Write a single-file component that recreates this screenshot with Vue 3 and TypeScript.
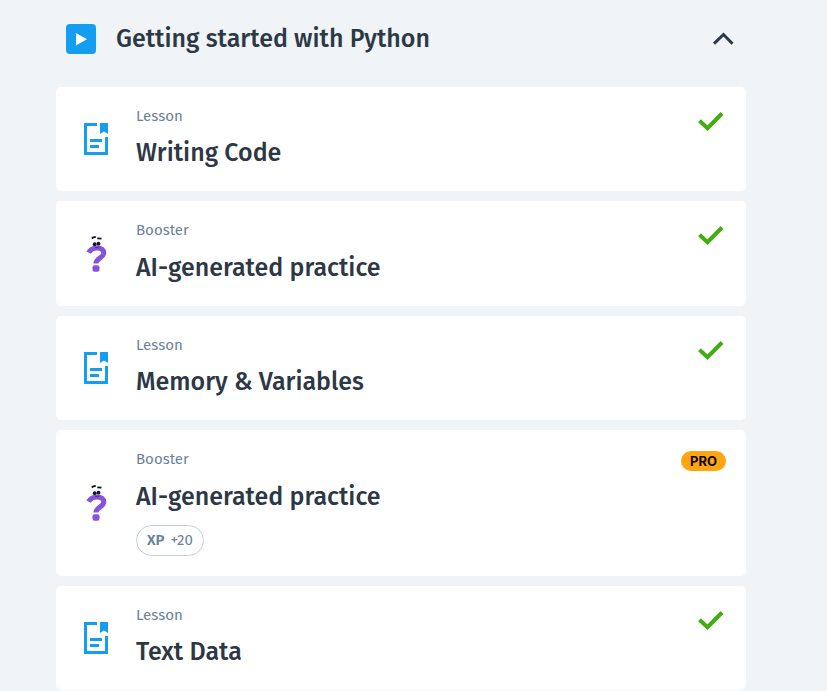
<script setup lang="ts">
import { ref } from 'vue'

interface Item {
  id: number
  kind: 'Lesson' | 'Booster'
  title: string
  status: 'done' | 'pro'
  xp?: number
}

const open = ref(true)

const items: Item[] = [
  { id: 1, kind: 'Lesson', title: 'Writing Code', status: 'done' },
  { id: 2, kind: 'Booster', title: 'AI-generated practice', status: 'done' },
  { id: 3, kind: 'Lesson', title: 'Memory & Variables', status: 'done' },
  { id: 4, kind: 'Booster', title: 'AI-generated practice', status: 'pro', xp: 20 },
  { id: 5, kind: 'Lesson', title: 'Text Data', status: 'done' },
]
</script>

<template>
  <main class="module">
    <h2 class="module-heading">
      <button class="module-toggle" type="button" :aria-expanded="open" @click="open = !open">
        <svg class="play" viewBox="0 0 30 30" aria-hidden="true">
          <rect width="30" height="30" rx="4" fill="#149ef2" />
          <path d="M10 9v12.500l11-6.250z" fill="#fff" />
        </svg>
        <span class="module-title">Getting started with Python</span>
        <svg class="chevron" :class="{ closed: !open }" viewBox="0 0 22 14" aria-hidden="true">
          <path d="M2 11.700L11.500 2.500l9 9.200" fill="none" stroke="#2d3846" stroke-width="3" />
        </svg>
      </button>
    </h2>

    <ul v-if="open" class="items">
      <li v-for="item in items" :key="item.id">
        <a href="#" class="card" :class="item.kind.toLowerCase()">
          <span class="icon">
            <svg v-if="item.kind === 'Lesson'" width="24" height="32" viewBox="0 0 24 32" aria-hidden="true">
              <path d="M0 0h13v3H3v26h18V14h3v18H0z" fill="#149ef2" />
              <path d="M16 0h8v11l-4-2.500-4 2.500z" fill="#149ef2" />
              <path d="M6 16h12v3H6zM6 22h9v3H6z" fill="#149ef2" />
            </svg>
            <svg v-else width="22" height="36" viewBox="0 0 22 36" aria-hidden="true">
              <path
                d="M3.600 16.600C5.300 13.300 8.200 11.900 12.300 11.900c4 0 6.500 1.800 6.500 5 0 5-7.700 5-7.900 10.600"
                fill="none" stroke="#8654dc" stroke-width="5"
              />
              <rect x="7.500" y="29.200" width="7" height="6.600" rx="2" fill="#8654dc" />
              <circle cx="9.700" cy="8.200" r="1.900" fill="#12122b" />
              <circle cx="13.500" cy="7.700" r="1.900" fill="#12122b" />
              <path d="M6.800 2.500l1.500-1.100 2.500-.5M12.300 2.300l4.200.4" fill="none" stroke="#12122b" stroke-width="1.800" />
              <path d="M10 11q2.300 1.800 4.500-.2" fill="none" stroke="#4d358e" stroke-width="1" />
            </svg>
          </span>
          <span class="body">
            <span class="kind">{{ item.kind }}</span>
            <span class="title">{{ item.title }}</span>
            <span v-if="item.xp" class="xp"><b>XP</b><span>+{{ item.xp }}</span></span>
          </span>
          <svg v-if="item.status === 'done'" class="check" viewBox="0 0 26 20" role="img" aria-label="Completed">
            <path d="M1.500 9.700l8 7.400L24 2.500" fill="none" stroke="#3fae0e" stroke-width="4" />
          </svg>
          <span v-else class="pro">PRO</span>
        </a>
      </li>
    </ul>
  </main>
</template>

<style>
body {
  background: #f0f4f7;
}
</style>

<style scoped>
.module {
  padding: 14px 81px 0 56px;
  font-family: "Fira Sans", "Noto Sans", sans-serif;
  color: #2d3846;
}
.module-heading {
  margin: 0;
}
.module-toggle {
  display: flex;
  align-items: center;
  gap: 20px;
  width: 100%;
  height: 50px;
  padding: 0 12px 0 10px;
  border: 0;
  background: none;
  color: inherit;
  font: inherit;
  text-align: left;
  cursor: pointer;
}
.play {
  flex: none;
  width: 30px;
  height: 30px;
}
.module-title {
  flex: 1;
  font-size: 25px;
  font-weight: 500;
  line-height: 32px;
}
.chevron {
  flex: none;
  width: 22px;
  height: 14px;
}
.closed {
  transform: rotate(180deg);
}
.items {
  display: flex;
  flex-direction: column;
  gap: 10px;
  margin: 23px 0 0;
  padding: 0;
  list-style: none;
}
.card {
  display: flex;
  align-items: center;
  gap: 20px;
  padding: 20px;
  border-radius: 5px;
  background: #fff;
  color: inherit;
  text-decoration: none;
}
.icon {
  display: flex;
  flex: none;
  justify-content: center;
  width: 40px;
}
.body {
  display: flex;
  flex: 1;
  flex-direction: column;
  align-items: flex-start;
}
.kind {
  color: #6b8299;
  font-size: 15px;
  line-height: 18px;
}
.title {
  margin: 12px 0 2px;
  font-size: 25px;
  font-weight: 500;
  line-height: 32px;
}
.booster .title {
  margin-top: 13px;
}
.xp {
  display: flex;
  gap: 6px;
  box-sizing: border-box;
  height: 31px;
  margin-top: 8px;
  margin-bottom: 0;
  padding: 0 10px;
  border: 1px solid #c5d0dc;
  border-radius: 16px;
  color: #6b8299;
  font-size: 15px;
  line-height: 29px;
}
.xp b {
  font-weight: 600;
}
.booster .title + .xp {
  margin-top: 10px;
}
.check {
  flex: none;
  align-self: flex-start;
  width: 26px;
  height: 20px;
  margin: 4px 2px 0 0;
}
.pro {
  flex: none;
  align-self: flex-start;
  margin-top: 1px;
  padding: 0 9px;
  border-radius: 10px;
  background: #ffa412;
  color: #080808;
  font-family: Inter, sans-serif;
  font-size: 13px;
  font-weight: 700;
  line-height: 20px;
}
</style>
